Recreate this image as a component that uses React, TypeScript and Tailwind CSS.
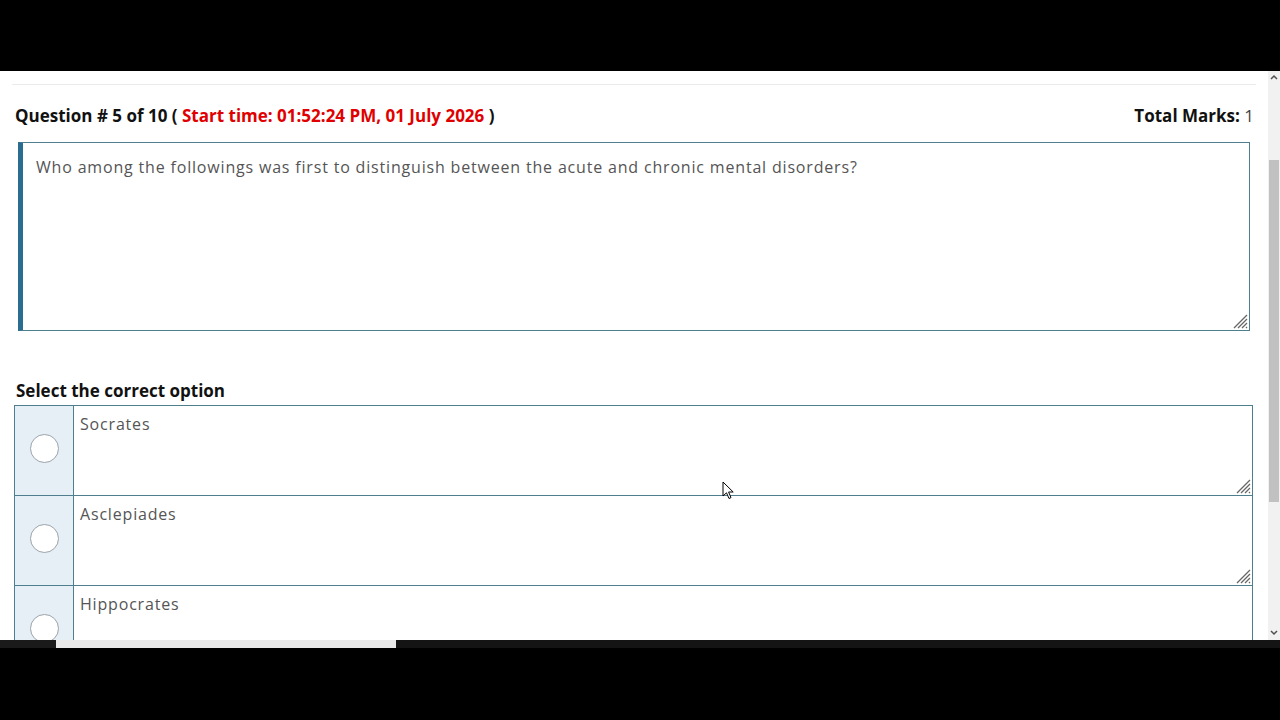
import React from 'react';

const options = ['Socrates', 'Asclepiades', 'Hippocrates'];

function Grip() {
  return (
    <svg width="17" height="17" viewBox="0 0 17 17" className="absolute right-[1px] bottom-[1px]">
      <path d="M16 3 L3 16 M16 7 L7 16 M16 11 L11 16 M16 15 L15 16" stroke="#666" strokeWidth="1.3" />
    </svg>
  );
}

function Cursor() {
  return (
    <svg width="14" height="20" viewBox="0 0 14 20" className="absolute left-[722px] top-[481px]">
      <path d="M1 1 L1 15 L4.5 11.8 L7 17.5 L9 16.6 L6.6 11 L11.2 11 Z" fill="#fff" stroke="#000" strokeWidth="1" strokeLinejoin="round" />
    </svg>
  );
}

export default function App() {
  return (
    <div className="relative w-[1280px] h-[720px] bg-black flex flex-col overflow-hidden" style={{ fontFamily: '"Open Sans", "Noto Sans", sans-serif' }}>
      <div className="h-[71px] bg-black" />

      <div className="h-[569px] bg-white flex">
        {/* page content */}
        <div className="flex-1 overflow-hidden px-[12px]">
          <div className="mt-[13px] border-t border-[#ebebeb]" />

          <div className="mt-[19px] flex items-center justify-between pl-[3px] pr-[2px] h-[24px]">
            <h2 className="text-[17px] font-bold text-[#111]">
              Question # 5 of 10 ({' '}
              <span className="text-[#e00000]">Start time: 01:52:24 PM, 01 July 2026</span> )
            </h2>
            <div className="text-[17px] font-bold text-[#111]">
              Total Marks: <span className="font-normal text-[#444]">1</span>
            </div>
          </div>

          <div className="relative mt-[14px] ml-[6px] mr-[6px] h-[189px] border border-[#4f7f8f] border-l-[5px] border-l-[#2a6d90] bg-white">
            <p className="pl-[13px] pt-[12px] text-[16px] text-[#555] tracking-[0.82px]">
              Who among the followings was first to distinguish between the acute and chronic mental disorders?
            </p>
            <Grip />
          </div>

          <h3 className="mt-[48px] pl-[4px] h-[24px] leading-[24px] text-[17px] font-bold text-[#111]">
            Select the correct option
          </h3>

          <div className="mt-[2px] ml-[2px] mr-[3px] border-t border-[#4f7f8f]">
            {options.map((opt) => (
              <div key={opt} className="flex h-[90px] border-l border-r border-b border-[#4f7f8f]">
                <div className="w-[59px] bg-[#e6eef6] border-r border-[#4f7f8f] flex items-center justify-center pb-[4px]">
                  <span className="w-[29px] h-[29px] rounded-full bg-white border border-[#9aa3aa]" />
                </div>
                <div className="relative flex-1 pl-[6px] pt-[6px]">
                  <span className="text-[16px] text-[#555] tracking-[0.82px]">{opt}</span>
                  <Grip />
                </div>
              </div>
            ))}
          </div>
        </div>

        {/* scrollbar */}
        <div className="w-[12px] bg-[#f1f1f1] flex flex-col items-center">
          <svg width="10" height="8" viewBox="0 0 10 8" className="mt-[2px]">
            <path d="M2 6 L5 3 L8 6" stroke="#505050" strokeWidth="1.5" fill="none" />
          </svg>
          <div className="mt-[79px] w-[10px] h-[342px] bg-[#c1c1c1]" />
          <div className="flex-1" />
          <svg width="10" height="8" viewBox="0 0 10 8" className="mb-[3px]">
            <path d="M2 2 L5 5 L8 2" stroke="#505050" strokeWidth="1.5" fill="none" />
          </svg>
        </div>
      </div>

      <div className="h-[80px] bg-black">
        <div className="flex h-[8px]">
          <div className="w-[56px] bg-[#1a1a1a]" />
          <div className="w-[340px] bg-[#e9e9e9]" />
          <div className="flex-1 bg-[#141414]" />
        </div>
      </div>

      <Cursor />
    </div>
  );
}
